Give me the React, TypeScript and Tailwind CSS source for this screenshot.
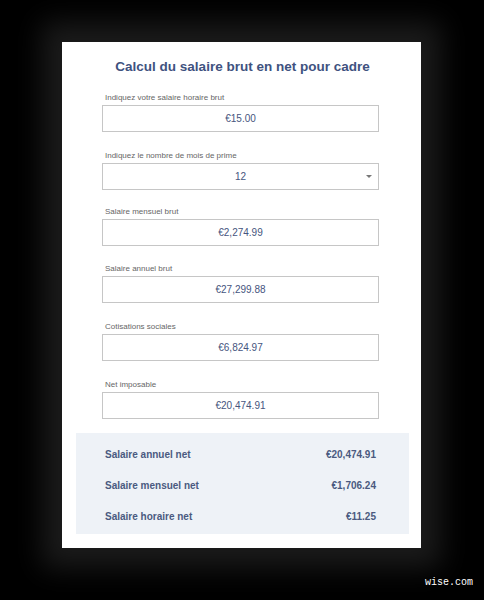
import React from "react";

type Field = {
  label: string;
  value: string;
  select?: boolean;
};

const fields: Field[] = [
  { label: "Indiquez votre salaire horaire brut", value: "€15.00" },
  { label: "Indiquez le nombre de mois de prime", value: "12", select: true },
  { label: "Salaire mensuel brut", value: "€2,274.99" },
  { label: "Salaire annuel brut", value: "€27,299.88" },
  { label: "Cotisations sociales", value: "€6,824.97" },
  { label: "Net imposable", value: "€20,474.91" },
];

// spacing above each field group, measured from the reference
const gaps = ["", "mt-[19px]", "mt-[17px]", "mt-[18px]", "mt-[19px]", "mt-[19px]"];

const results = [
  { label: "Salaire annuel net", value: "€20,474.91" },
  { label: "Salaire mensuel net", value: "€1,706.24" },
  { label: "Salaire horaire net", value: "€11.25" },
];

const App: React.FC = () => {
  return (
    <div className="w-[484px] h-[600px] bg-black overflow-hidden font-['Liberation_Sans',Arial,sans-serif]">
      <div className="pt-[42px] pl-[62px]">
        <div className="w-[359px] h-[506px] bg-white shadow-[0_0_26px_20px_#1b1b1b] pl-[14px] pr-[12px] pt-[15px] flex flex-col">
          <h1 className="text-center text-[13.5px] leading-[20px] font-bold text-[#40527f]">
            Calcul du salaire brut en net pour cadre
          </h1>

          <div className="mt-[16px] pl-[26px] pr-[30px] flex flex-col">
            {fields.map((field, i) => (
              <div key={field.label} className={gaps[i]}>
                <div className="text-[8px] leading-[10px] text-[#666] pl-[3px]">
                  {field.label}
                </div>
                <div className="relative mt-[2px] h-[27px] border border-[#c6c6c6] flex items-center justify-center text-[10px] text-[#46557e]">
                  {field.value}
                  {field.select && (
                    <span className="absolute right-[6px] top-[11px] w-0 h-0 border-l-[3px] border-r-[3px] border-t-[3px] border-l-transparent border-r-transparent border-t-[#777]" />
                  )}
                </div>
              </div>
            ))}
          </div>

          <div className="mt-[14px] h-[101px] bg-[#eef2f7] pt-[16px] pl-[29px] pr-[33px] flex flex-col gap-[19px]">
            {results.map((row) => (
              <div
                key={row.label}
                className="flex justify-between text-[10px] leading-[12px] font-bold text-[#4a5a80]"
              >
                <span>{row.label}</span>
                <span>{row.value}</span>
              </div>
            ))}
          </div>
        </div>
      </div>
      <div className="mt-[29px] pr-[11px] text-right text-[10px] leading-[12px] text-white font-['Liberation_Mono',monospace]">
        wise.com
      </div>
    </div>
  );
};

export default App;
